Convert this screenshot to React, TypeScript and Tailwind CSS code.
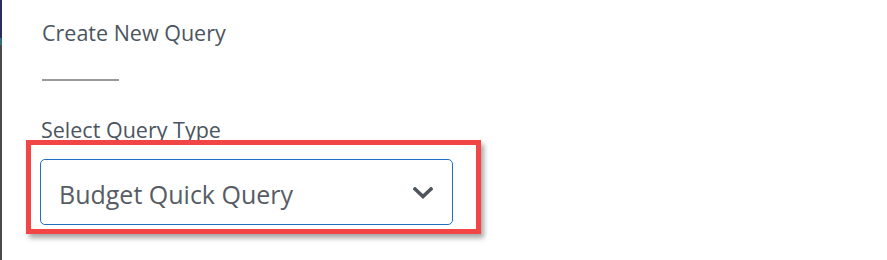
import React from "react";

export default function App() {
  const font = { fontFamily: '"Open Sans", "Noto Sans", sans-serif' };
  return (
    <div className="flex h-[260px] w-[887px] bg-white overflow-hidden" style={font}>
      <div className="flex w-[2px] flex-col">
        <div className="h-[38px] bg-[#2b2b5c]" />
        <div className="h-[7px] bg-[#2f6f7a]" />
        <div className="flex-1 bg-[#4a4a4a]" />
      </div>
      <div className="flex flex-col pl-[38px] pt-[18px]">
        <div className="pl-[2px] text-[21.5px] leading-[30px] text-[#4b5560]">Create New Query</div>
        <div className="ml-[2px] mt-[31px] h-[2px] w-[77px] bg-[#9a9a9a]" />
        <div className="pl-[1px] mt-[35px] text-[21.5px] leading-[28px] text-[#4b5560]">Select Query Type</div>
        <div className="ml-[-14px] mt-[-4px] w-[455px] border-[5px] border-[#f24646] pt-[14px] pr-[23px] pb-[4px] pl-[9px] shadow-[3px_4px_5px_rgba(0,0,0,0.35)]">
          <div className="flex h-[66px] w-[413px] items-center justify-between rounded-[5px] border border-[#2270c4] pl-[18px] pr-[19px]">
            <span className="mt-[6px] text-[25px] text-[#575c64]">Budget Quick Query</span>
            <svg width="20" height="12" viewBox="0 0 20 12" className="mt-[2px]">
              <path d="M2 2 L10 9.5 L18 2" fill="none" stroke="#50555d" strokeWidth="3.6" strokeLinecap="square" />
            </svg>
          </div>
        </div>
      </div>
    </div>
  );
}
